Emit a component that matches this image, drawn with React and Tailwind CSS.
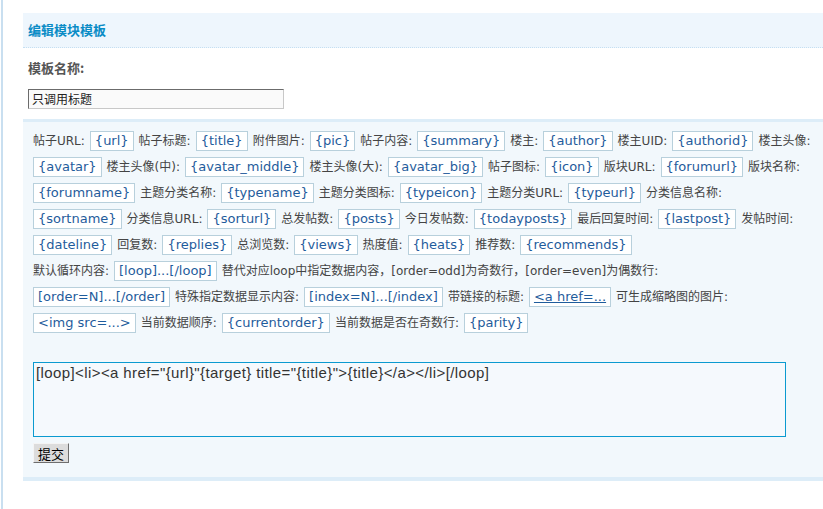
import React from 'react'

const rows = [
  ['帖子URL:', '{url}', '帖子标题:', '{title}', '附件图片:', '{pic}', '帖子内容:', '{summary}', '楼主:', '{author}', '楼主UID:', '{authorid}', '楼主头像:'],
  ['{avatar}', '楼主头像(中):', '{avatar_middle}', '楼主头像(大):', '{avatar_big}', '帖子图标:', '{icon}', '版块URL:', '{forumurl}', '版块名称:'],
  ['{forumname}', '主题分类名称:', '{typename}', '主题分类图标:', '{typeicon}', '主题分类URL:', '{typeurl}', '分类信息名称:'],
  ['{sortname}', '分类信息URL:', '{sorturl}', '总发帖数:', '{posts}', '今日发帖数:', '{todayposts}', '最后回复时间:', '{lastpost}', '发帖时间:'],
  ['{dateline}', '回复数:', '{replies}', '总浏览数:', '{views}', '热度值:', '{heats}', '推荐数:', '{recommends}'],
  ['默认循环内容:', '[loop]...[/loop]', '替代对应loop中指定数据内容，[order=odd]为奇数行，[order=even]为偶数行:'],
  ['[order=N]...[/order]', '特殊指定数据显示内容:', '[index=N]...[/index]', '带链接的标题:', '<a href=...', '可生成缩略图的图片:'],
  ['<img src=...>', '当前数据顺序:', '{currentorder}', '当前数据是否在奇数行:', '{parity}'],
]

const isTag = (s) => /^[{[<]/.test(s)

function Tag({ text }) {
  const link = text.startsWith('<a')
  return (
    <span className="shrink-0 border border-[#b8d0dc] bg-white px-1 text-[13px] leading-[18px] text-[#1f5c9c] [font-family:'DejaVu_Sans',sans-serif]">
      <span className={link ? 'underline' : ''}>{text}</span>
    </span>
  )
}

function App() {
  return (
    <div className="h-screen overflow-hidden bg-white [font-family:'DejaVu_Sans','Noto_Sans_CJK_SC',sans-serif]">
      <div className="ml-px h-full border-l-2 border-[#c9dff0] pl-5 pt-[13px]">
        {/* 标题 */}
        <div className="flex h-[35px] items-center border-b border-dotted border-[#c5dff2] bg-[#eef6fd] pl-[5px]">
          <h2 className="text-[13px] font-bold text-[#0a8cc6] [font-family:'Noto_Sans_CJK_SC',sans-serif]">编辑模块模板</h2>
        </div>

        {/* 模板名称 */}
        <div className="pl-[5px]">
          <div className="flex h-[39px] items-center pt-px text-[13px] font-bold text-[#555] [font-family:'Noto_Sans_CJK_SC',sans-serif]">
            模板名称:
          </div>
          <input
            defaultValue="只调用标题"
            className="h-5 w-64 border border-t-[#6b6b6b] border-l-[#6b6b6b] border-r-[#c8c8c8] border-b-[#c8c8c8] bg-[#fafafa] px-[3px] text-[12px] text-[#222] outline-none [font-family:'Noto_Sans_CJK_SC',sans-serif]"
          />
        </div>

        {/* 模板内容 */}
        <div className="mt-2 border-t-[3px] border-b-4 border-[#ddedf8] bg-[#f2f8fc] pl-[10px] pt-[9px] pb-[14px]">
          <div className="flex flex-col gap-[6px]">
            {rows.map((row, i) => (
              <div key={i} className="flex h-5 items-center gap-[5px] whitespace-nowrap">
                {row.map((item, j) =>
                  isTag(item) ? (
                    <Tag key={j} text={item} />
                  ) : (
                    <span key={j} className="shrink-0 text-[12px] text-[#444]">{item}</span>
                  ),
                )}
              </div>
            ))}
          </div>

          <textarea
            spellCheck={false}
            defaultValue={'[loop]<li><a href="{url}"{target} title="{title}">{title}</a></li>[/loop]'}
            className="mt-[29px] block h-[75px] w-[753px] resize-none border border-[#0b9ad0] bg-[#f5f9fd] px-[2px] py-0 text-[15px] leading-[20px] tracking-[0.4px] text-[#333] outline-none [font-family:'Liberation_Sans',sans-serif]"
          />

          <button className="mt-[6px] block h-5 w-9 border border-t-[#f4f4f4] border-l-[#f4f4f4] border-r-[#6e6e6e] border-b-[#6e6e6e] bg-[#dcdcdc] text-[13px] leading-none text-black [font-family:'Noto_Sans_CJK_SC',sans-serif]">
            提交
          </button>
        </div>
      </div>
    </div>
  )
}

export default App
